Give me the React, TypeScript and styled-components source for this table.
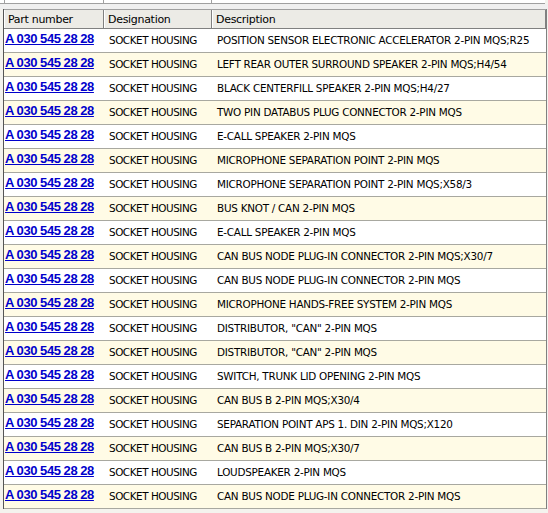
import React from "react";
import styled, { createGlobalStyle } from "styled-components";

const Global = createGlobalStyle`
  html, body { margin: 0; padding: 0; background: #ffffff; }
  body { font-family: Tahoma, "DejaVu Sans", Verdana, sans-serif; }
`;

const Frame = styled.div`
  width: 548px;
  height: 513px;
  overflow: hidden;
  background: #f4f3ee;
  display: flex;
  flex-direction: column;
`;

const TopStrip = styled.div`
  height: 3px;
  background: #ffffff;
  border-bottom: 1px solid #a0a0a0;
  display: grid;
  grid-template-columns: 5px 99px 108px 1fr;
  margin-right: 3px;
`;

const StripCell = styled.div`
  border-right: 1px solid #a0a0a0;
`;

const Gap = styled.div`
  height: 5px;
  background: #f0f0f0;
`;

const Table = styled.div`
  margin-left: 3px;
  width: 542px;
  border-left: 1px solid #555;
  border-right: 1px solid #808080;
  display: flex;
  flex-direction: column;
`;

const cols = "100px 108px 1fr";

const Header = styled.div`
  display: grid;
  grid-template-columns: ${cols};
  height: 18px;
  background: #ecebe6;
  border-top: 1px solid #a0a0a0;
  border-bottom: 1px solid #808080;
`;

const HeadCell = styled.div`
  font-family: Tahoma, "DejaVu Sans", sans-serif;
  font-size: 11px;
  color: #000;
  display: flex;
  align-items: center;
  padding-left: 3px;
  border-left: 1px solid #ffffff;
  border-right: 1px solid #808080;
  letter-spacing: -0.3px;
`;

const Row = styled.div<{ $alt: boolean }>`
  display: grid;
  grid-template-columns: ${cols};
  height: 23px;
  background: ${(p) => (p.$alt ? "#fffbe6" : "#ffffff")};
  border-bottom: 1px solid #a8a8a0;
  align-items: center;
`;

const PartLink = styled.a`
  font-family: "Liberation Sans", Arial, sans-serif;
  font-weight: bold;
  font-size: 13px;
  color: #0000cc;
  text-decoration: underline;
  padding-left: 1px;
  margin-top: -5px;
  letter-spacing: -0.45px;
  white-space: nowrap;
`;

const Cell = styled.div<{ $spacing: number }>`
  font-family: "DejaVu Sans", Tahoma, sans-serif;
  font-size: 10.4px;
  color: #000;
  padding-left: 5px;
  margin-top: -1px;
  letter-spacing: ${(p) => p.$spacing}px;
  white-space: nowrap;
  overflow: hidden;
`;

const rows = [
  "POSITION SENSOR ELECTRONIC ACCELERATOR 2-PIN MQS;R25",
  "LEFT REAR OUTER SURROUND SPEAKER 2-PIN MQS;H4/54",
  "BLACK CENTERFILL SPEAKER 2-PIN MQS;H4/27",
  "TWO PIN DATABUS PLUG CONNECTOR 2-PIN MQS",
  "E-CALL SPEAKER 2-PIN MQS",
  "MICROPHONE SEPARATION POINT 2-PIN MQS",
  "MICROPHONE SEPARATION POINT 2-PIN MQS;X58/3",
  "BUS KNOT / CAN 2-PIN MQS",
  "E-CALL SPEAKER 2-PIN MQS",
  "CAN BUS NODE PLUG-IN CONNECTOR 2-PIN MQS;X30/7",
  "CAN BUS NODE PLUG-IN CONNECTOR 2-PIN MQS",
  "MICROPHONE HANDS-FREE SYSTEM 2-PIN MQS",
  'DISTRIBUTOR, "CAN" 2-PIN MQS',
  'DISTRIBUTOR, "CAN" 2-PIN MQS',
  "SWITCH, TRUNK LID OPENING 2-PIN MQS",
  "CAN BUS B 2-PIN MQS;X30/4",
  "SEPARATION POINT APS 1. DIN 2-PIN MQS;X120",
  "CAN BUS B 2-PIN MQS;X30/7",
  "LOUDSPEAKER 2-PIN MQS",
  "CAN BUS NODE PLUG-IN CONNECTOR 2-PIN MQS",
];

export default function App() {
  return (
    <Frame>
      <Global />
      <TopStrip>
        <StripCell />
        <StripCell />
        <StripCell />
        <div />
      </TopStrip>
      <Gap />
      <Table>
        <Header>
          <HeadCell>Part number</HeadCell>
          <HeadCell>Designation</HeadCell>
          <HeadCell>Description</HeadCell>
        </Header>
        {rows.map((d, i) => (
          <Row key={i} $alt={i % 2 === 1}>
            <PartLink href="#">A 030 545 28 28</PartLink>
            <Cell $spacing={-0.45}>SOCKET HOUSING</Cell>
            <Cell $spacing={-0.25}>{d}</Cell>
          </Row>
        ))}
      </Table>
    </Frame>
  );
}
